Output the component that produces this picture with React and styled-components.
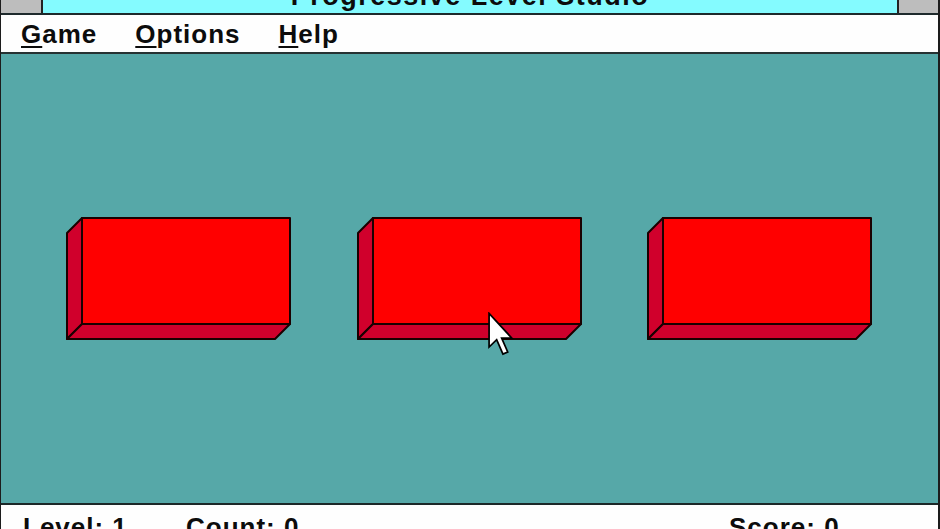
import React from 'react';
import styled, { createGlobalStyle } from 'styled-components';

const GlobalStyle = createGlobalStyle`
  html, body {
    margin: 0;
    padding: 0;
    background: #000;
  }
  body {
    font-family: "Liberation Sans", Arial, sans-serif;
  }
`;

const Window = styled.div`
  display: flex;
  flex-direction: column;
  width: 940px;
  height: 529px;
  overflow: hidden;
  background: #fff;
  border-left: 1px solid #1c1c1c;
  border-right: 2px solid #1c1c1c;
  box-sizing: border-box;
  font-weight: bold;
  font-size: 26px;
  line-height: 26px;
  letter-spacing: 1px;
  color: #0c0c0c;
`;

const TitleBar = styled.div`
  display: flex;
  height: 13px;
  flex: none;
  overflow: hidden;
  background: #84fbff;
  border-bottom: 2px solid #1e2a2c;
`;

const TitleButton = styled.div`
  flex: none;
  width: ${(p) => p.width}px;
  background: #bdbdbd;
  border-left: ${(p) => (p.side === 'right' ? '2px solid #222' : 'none')};
  border-right: ${(p) => (p.side === 'left' ? '2px solid #222' : 'none')};
`;

const Title = styled.div`
  flex: 1;
  margin-top: -17px;
  text-align: center;
  white-space: nowrap;
  font-size: 27px;
  letter-spacing: 1.5px;
`;

const MenuBar = styled.nav`
  display: flex;
  gap: 38px;
  height: 39px;
  flex: none;
  box-sizing: border-box;
  padding: 6px 0 0 20px;
  background: #fefefe;
  border-bottom: 2px solid #263233;
`;

const MenuItem = styled.span`
  white-space: nowrap;
`;

const Mnemonic = styled.span`
  text-decoration: underline;
  text-decoration-thickness: 2px;
  text-underline-offset: 3px;
`;

const Playfield = styled.main`
  position: relative;
  flex: 1;
  display: flex;
  align-items: center;
  justify-content: space-evenly;
  background: #56a8a8;
`;

const StatusBar = styled.footer`
  display: grid;
  grid-template-columns: 163px 1fr 209px;
  height: 26px;
  flex: none;
  box-sizing: border-box;
  padding: 9px 0 0 22px;
  background: #fefefe;
  border-top: 2px solid #1c2828;
`;

const BrickShape = styled.svg`
  display: block;
  flex: none;
`;

const Pointer = styled.svg`
  position: absolute;
  left: 487px;
  top: 258px;
`;

// one red tile, front face with its left and bottom sides
function Brick() {
  return (
    <BrickShape width="226" height="124" viewBox="0 0 226 124">
      <g stroke="#1a0000" strokeWidth="2" strokeLinejoin="round">
        <polygon points="1,16 16,1 16,107 1,122" fill="#d0002c" />
        <polygon points="1,122 16,107 224,107 209,122" fill="#d0002c" />
        <rect x="16" y="1" width="208" height="106" fill="#ff0000" />
      </g>
    </BrickShape>
  );
}

function Cursor() {
  return (
    <Pointer width="26" height="44" viewBox="0 0 12 20">
      <path
        d="M0.5 0.5 V16 L4 12.6 L6.9 19.3 L9.1 18.3 L6.3 11.9 H11 Z"
        fill="#fff"
        stroke="#000"
        strokeWidth="0.8"
        strokeLinejoin="miter"
      />
    </Pointer>
  );
}

const menus = [
  { key: 'G', rest: 'ame' },
  { key: 'O', rest: 'ptions' },
  { key: 'H', rest: 'elp' },
];

export default function App() {
  return (
    <>
      <GlobalStyle />
      <Window>
        <TitleBar>
          <TitleButton side="left" width={40} />
          <Title>Progressive Level Studio</Title>
          <TitleButton side="right" width={39} />
        </TitleBar>
        <MenuBar>
          {menus.map((m) => (
            <MenuItem key={m.key}>
              <Mnemonic>{m.key}</Mnemonic>
              {m.rest}
            </MenuItem>
          ))}
        </MenuBar>
        <Playfield>
          <Brick />
          <Brick />
          <Brick />
          <Cursor />
        </Playfield>
        <StatusBar>
          <span>Level: 1</span>
          <span>Count: 0</span>
          <span>Score: 0</span>
        </StatusBar>
      </Window>
    </>
  );
}
